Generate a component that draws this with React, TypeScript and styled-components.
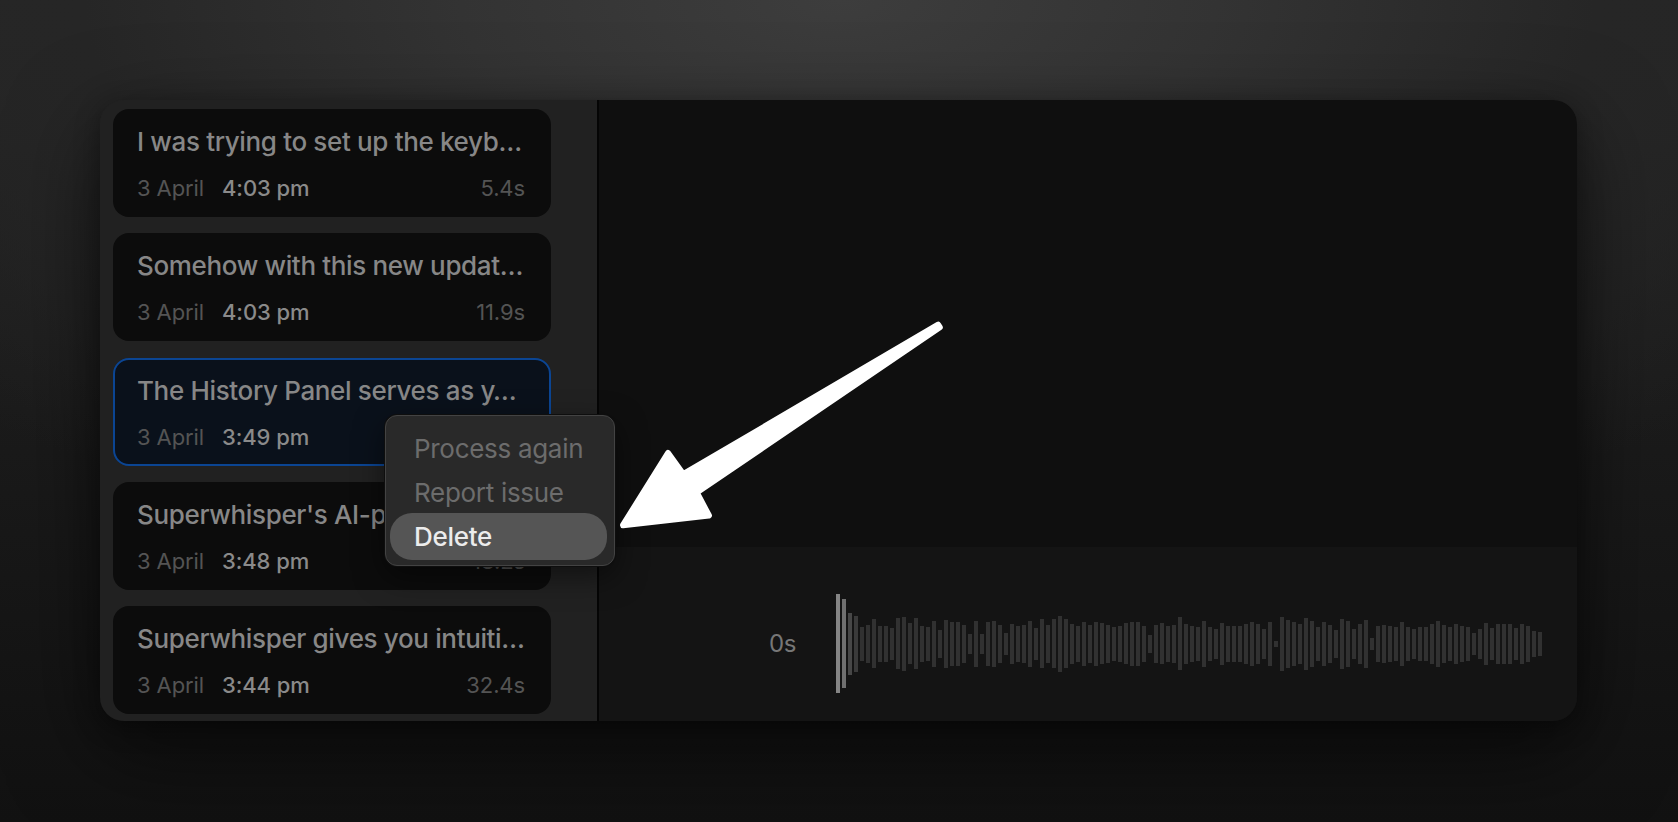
import React from "react";
import styled, { createGlobalStyle } from "styled-components";

const GlobalStyle = createGlobalStyle`
  html, body {
    margin: 0;
    padding: 0;
    background: #141414;
  }
  * { box-sizing: border-box; }
`;

const Stage = styled.div`
  position: relative;
  width: 1678px;
  height: 822px;
  overflow: hidden;
  padding: 100px 101px 0 100px;
  font-family: Inter, "Noto Sans", sans-serif;
  background:
    radial-gradient(ellipse 75% 70% at 50% 0%, #3d3d3d 0%, #333333 30%, #262626 60%, rgba(22,22,22,0) 100%),
    linear-gradient(180deg, #262626 0%, #1b1b1b 50%, #111111 100%);
`;

const Window = styled.div`
  display: flex;
  width: 1477px;
  height: 621px;
  border-radius: 24px;
  overflow: hidden;
  box-shadow: 0 30px 90px rgba(0, 0, 0, 0.55), 0 6px 24px rgba(0, 0, 0, 0.35);
`;

const Sidebar = styled.div`
  flex: none;
  width: 499px;
  background: #212121;
  border-right: 2px solid #050505;
  padding: 9px 46px 0 13px;
  display: flex;
  flex-direction: column;
  gap: 16.25px;
`;

const Card = styled.div<{ $selected?: boolean }>`
  flex: none;
  height: 108px;
  border-radius: 16px;
  border: 2px solid ${(p) => (p.$selected ? "#0b4593" : "transparent")};
  background: ${(p) => (p.$selected ? "#0a111b" : "#0c0c0c")};
  padding: 15px 24px 0 22px;
  display: flex;
  flex-direction: column;
  gap: 17px;
`;

const Title = styled.div`
  font-size: 26px;
  line-height: 32px;
  font-weight: 500;
  letter-spacing: -0.35px;
  color: #878787;
  white-space: nowrap;
  overflow: hidden;
`;

const Meta = styled.div`
  display: flex;
  align-items: baseline;
  font-size: 22px;
  line-height: 26px;
  letter-spacing: -0.1px;
`;

const DateText = styled.span`
  color: #545454;
  font-weight: 400;
  margin-right: 18px;
`;

const TimeText = styled.span`
  color: #8a8a8a;
  font-weight: 500;
`;

const Duration = styled.span`
  margin-left: auto;
  color: #545454;
  font-weight: 400;
`;

const Main = styled.div`
  flex: 1;
  display: flex;
  flex-direction: column;
`;

const Detail = styled.div`
  flex: 1;
  background: #0f0f0f;
`;

const Player = styled.div`
  flex: none;
  height: 174px;
  background: #141414;
  display: flex;
  align-items: center;
  padding: 19px 0 0 170px;
`;

const TimeLabel = styled.div`
  font-size: 24px;
  color: #777777;
  width: 67px;
  flex: none;
  letter-spacing: -0.3px;
`;

const Wave = styled.div`
  display: flex;
  align-items: center;
  gap: 2px;
  height: 100px;
`;

const Bar = styled.div<{ $tone: string }>`
  width: 4px;
  flex: none;
  background: ${(p) => p.$tone};
`;

const Menu = styled.div`
  position: absolute;
  left: 385px;
  top: 415px;
  width: 230px;
  height: 151px;
  background: #292929;
  border: 1px solid #434343;
  border-radius: 12px;
  box-shadow: 0 0 0 1px #0e0e0e, 0 10px 30px rgba(0, 0, 0, 0.5);
  padding: 10px 7px 5px 4px;
  display: flex;
  flex-direction: column;
`;

const MenuItem = styled.div<{ $active?: boolean }>`
  height: ${(p) => (p.$active ? "47px" : "44px")};
  margin-top: ${(p) => (p.$active ? "-1px" : "0")};
  display: flex;
  align-items: center;
  padding-left: 24px;
  border-radius: 22px;
  font-size: 26px;
  letter-spacing: -0.3px;
  font-weight: ${(p) => (p.$active ? 500 : 400)};
  color: ${(p) => (p.$active ? "#ececec" : "#6c6c6c")};
  background: ${(p) => (p.$active ? "#555555" : "transparent")};
`;

const ArrowLayer = styled.svg`
  position: absolute;
  left: 600px;
  top: 300px;
  overflow: visible;
`;

const items = [
  { title: "I was trying to set up the keyb…", date: "3 April", time: "4:03 pm", dur: "5.4s" },
  { title: "Somehow with this new updat…", date: "3 April", time: "4:03 pm", dur: "11.9s" },
  { title: "The History Panel serves as y…", date: "3 April", time: "3:49 pm", dur: "24.8s", selected: true },
  { title: "Superwhisper's AI-powered m…", date: "3 April", time: "3:48 pm", dur: "18.2s" },
  { title: "Superwhisper gives you intuiti…", date: "3 April", time: "3:44 pm", dur: "32.4s" },
];

const heights = [
  99, 89, 62, 56, 34, 38, 49, 36, 36, 32,
  51, 54, 41, 51, 36, 34, 46, 28, 48, 44,
  44, 38, 20, 46, 20, 44, 46, 38, 22, 40,
  36, 38, 46, 32, 49, 38, 49, 56, 49, 40,
  36, 44, 38, 44, 41, 38, 34, 36, 41, 44,
  44, 36, 18, 38, 41, 36, 38, 53, 40, 36,
  34, 46, 34, 30, 42, 36, 36, 36, 40, 44,
  40, 30, 44, 6, 54, 48, 44, 40, 52, 46,
  34, 44, 38, 28, 50, 46, 30, 40, 48, 12,
  36, 38, 36, 34, 44, 34, 30, 34, 34, 40,
  46, 38, 34, 40, 36, 34, 22, 30, 42, 32,
  40, 40, 40, 32, 40, 36, 26, 24,
];

const toneFor = (i: number) =>
  i === 0 ? "#858585" : i === 1 ? "#707070" : i === 2 ? "#474747" : i === 3 ? "#3a3a3a" : "#313131";

export default function App() {
  return (
    <>
      <GlobalStyle />
      <Stage>
        <Window>
          <Sidebar>
            {items.map((it, i) => (
              <Card key={i} $selected={it.selected}>
                <Title>{it.title}</Title>
                <Meta>
                  <DateText>{it.date}</DateText>
                  <TimeText>{it.time}</TimeText>
                  <Duration>{it.dur}</Duration>
                </Meta>
              </Card>
            ))}
          </Sidebar>
          <Main>
            <Detail />
            <Player>
              <TimeLabel>0s</TimeLabel>
              <Wave>
                {heights.map((h, i) => (
                  <Bar key={i} $tone={toneFor(i)} style={{ height: h }} />
                ))}
              </Wave>
            </Player>
          </Main>
        </Window>

        <Menu>
          <MenuItem>Process again</MenuItem>
          <MenuItem>Report issue</MenuItem>
          <MenuItem $active>Delete</MenuItem>
        </Menu>

        <ArrowLayer width="360" height="250" viewBox="0 0 360 250">
          <path
            d="M338.2 24.7 L339.8 27.3 L96.7 192.5 L108.9 215.5 L23 225.2 L68 153 L83.3 174.2 Z"
            fill="#ffffff"
            stroke="#ffffff"
            strokeWidth="6"
            strokeLinejoin="round"
          />
        </ArrowLayer>
      </Stage>
    </>
  );
}
